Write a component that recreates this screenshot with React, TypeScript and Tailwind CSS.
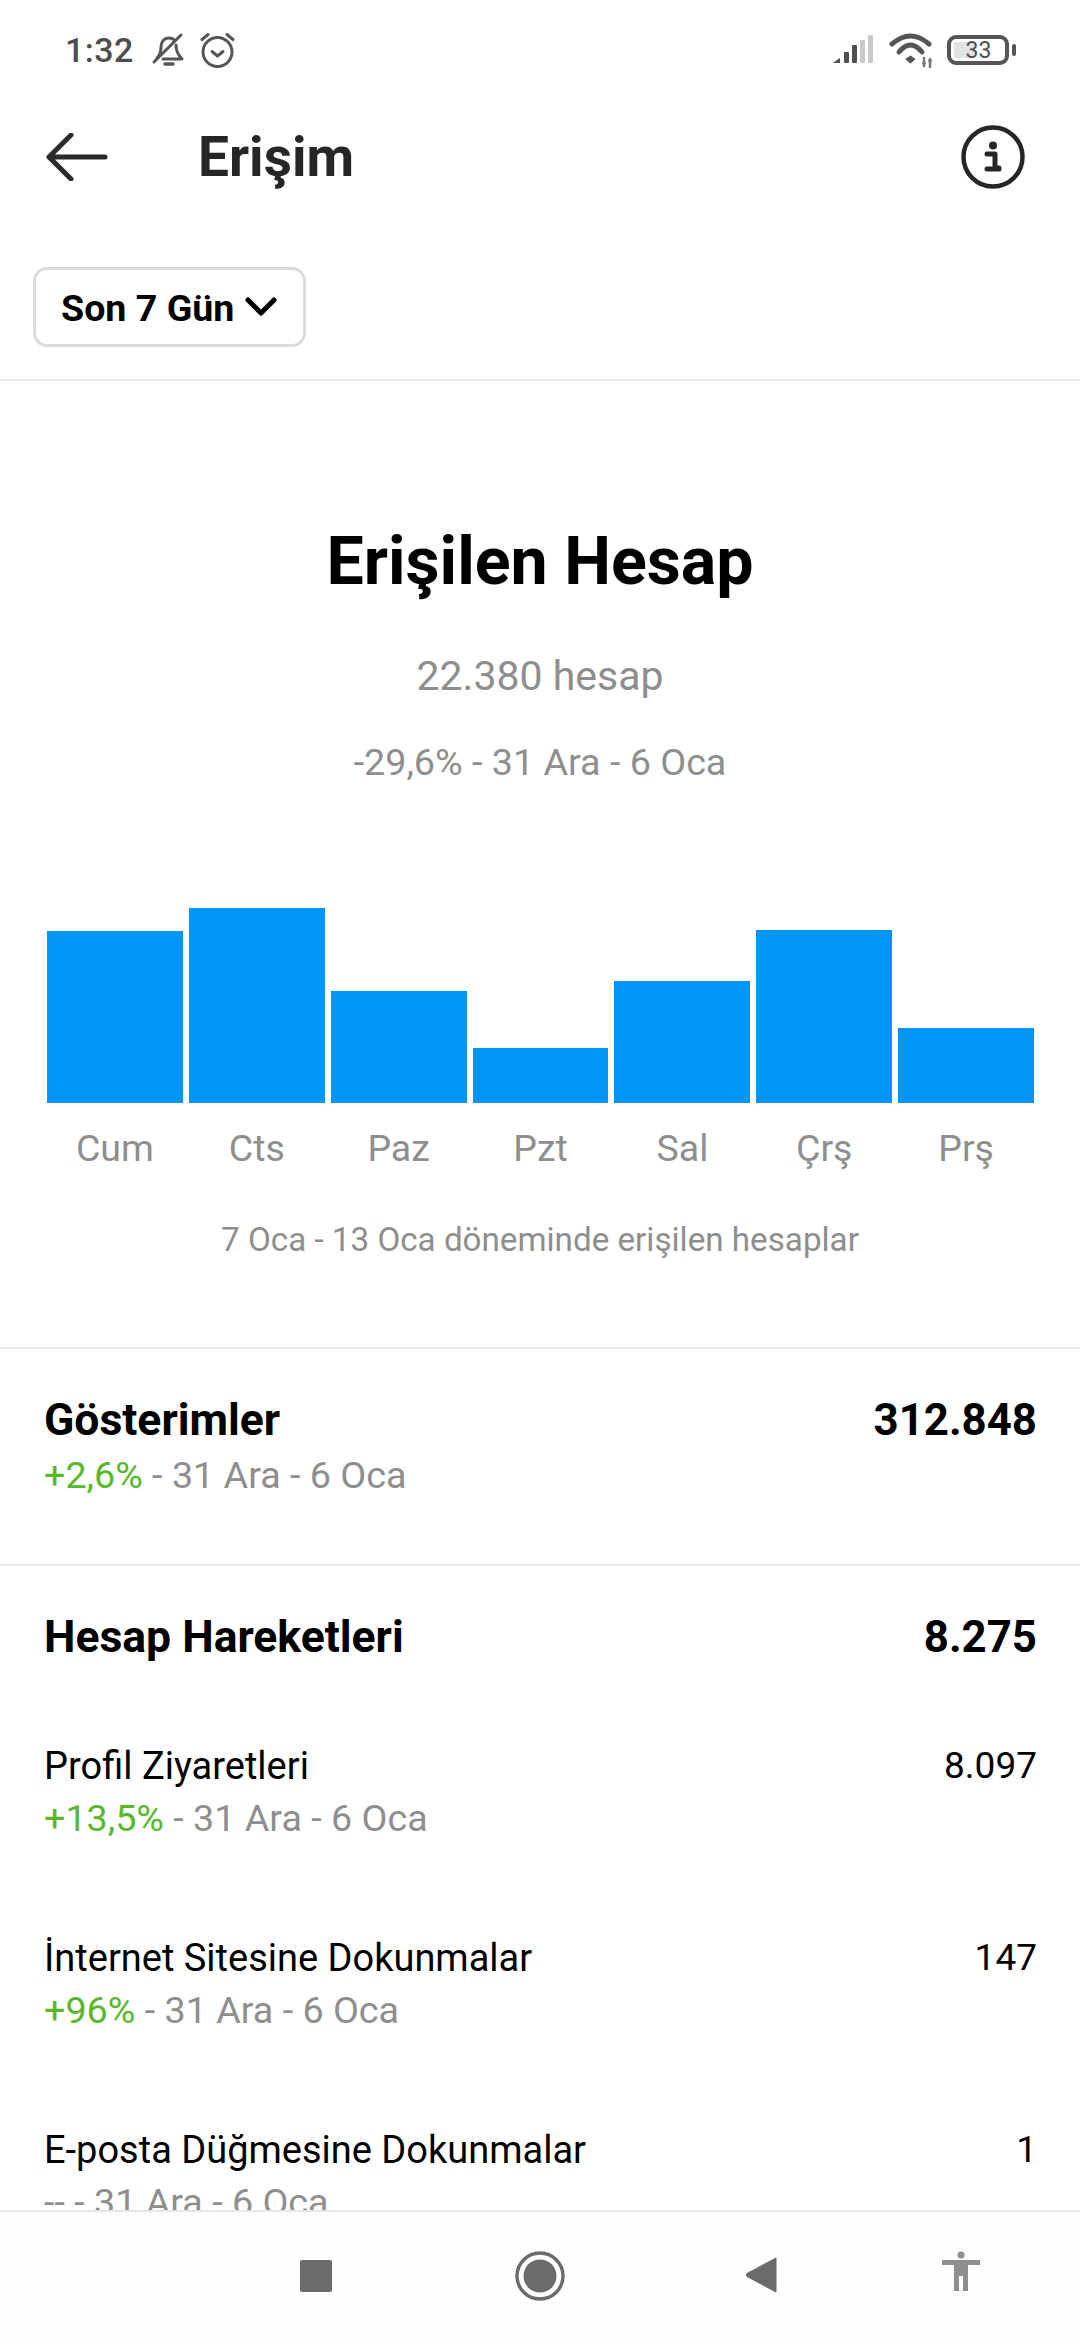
import { ReactNode } from "react";

const BARS = [
  { day: "Cum", h: 172 },
  { day: "Cts", h: 195 },
  { day: "Paz", h: 112 },
  { day: "Pzt", h: 55 },
  { day: "Sal", h: 122 },
  { day: "Çrş", h: 173 },
  { day: "Prş", h: 75 },
];

const ROWS = [
  { name: "Profil Ziyaretleri", value: "8.097", change: "+13,5%" },
  { name: "İnternet Sitesine Dokunmalar", value: "147", change: "+96%" },
  { name: "E-posta Düğmesine Dokunmalar", value: "1", change: "--" },
];

function Sub({ change, green }: { change: string; green?: boolean }) {
  return (
    <p className="text-[37.7px] leading-[46px] text-[#8e8e8e]">
      <span className={green ? "text-[#58b82c]" : ""}>{change}</span> - 31 Ara - 6 Oca
    </p>
  );
}

function Row({ left, right }: { left: ReactNode; right: ReactNode }) {
  return (
    <div className="flex justify-between items-center">
      {left}
      {right}
    </div>
  );
}

function StatusBar() {
  return (
    <div className="h-[100px] flex items-center justify-between pl-[65px] pr-[64px] text-[#4d4d4d]">
      <div className="flex items-center">
        <span className="text-[34px] font-medium leading-none tracking-[0.5px]">1:32</span>
        {/* sessiz zil */}
        <svg className="ml-[17px]" width="34" height="36" viewBox="0 0 34 36" fill="none" stroke="#555" strokeWidth="3" strokeLinecap="round" strokeLinejoin="round">
          <path d="M6 26c3-3 4-6 4-11 0-5 3-9 8-9 2 0 4 .7 5.500 2" />
          <path d="M25 13c0 6 2 10 6 14H12" />
          <path d="M14 32h8" strokeWidth="3.500" />
          <path d="M3 30 30 3" />
        </svg>
        {/* alarm */}
        <svg className="ml-[15px]" width="35" height="36" viewBox="0 0 35 36" fill="none" stroke="#555" strokeWidth="3" strokeLinecap="round" strokeLinejoin="round">
          <circle cx="17.500" cy="20" r="14.500" />
          <path d="M12 19.500l5.500 4.500 5.500-4.500" />
          <path d="M2 7.500 8 2.500M33 7.500 27 2.500" />
        </svg>
      </div>
      <div className="flex items-center">
        {/* sinyal */}
        <svg width="40" height="30" viewBox="0 0 40 30">
          <path d="M0 28 7 23v5z" fill="#4f4f4f" />
          <rect x="11" y="17" width="5" height="11" fill="#4f4f4f" rx="1" />
          <rect x="19" y="10" width="5" height="18" fill="#4f4f4f" rx="1" />
          <rect x="27" y="5" width="5" height="23" fill="#c9c9c9" rx="1" />
          <rect x="35" y="0" width="5" height="28" fill="#c9c9c9" rx="1" />
        </svg>
        {/* wifi */}
        <svg className="ml-[16px]" width="46" height="35" viewBox="0 0 46 35" fill="none" stroke="#555" strokeLinecap="round">
          <path d="M3 11Q21.500-5 40 11" strokeWidth="5" />
          <path d="M10 19Q21.500 5 33 19" strokeWidth="5" />
          <path d="M17 26l4.500-3 4.500 3-4.500 4z" fill="#555" strokeWidth="1" />
          <path d="M35 25v8M41 26v8" stroke="#777" strokeWidth="2.500" />
          <path d="M32.500 29.500h5l-2.500 4zM38.500 28.500h5l-2.500-4z" fill="#777" stroke="none" />
        </svg>
        <div className="relative ml-[12px] w-[62px] h-[30px] mr-[7px] rounded-[9px] border-[4px] border-[#555] flex items-center justify-center">
          <div className="absolute left-[3px] top-[3px] bottom-[3px] w-[20px] bg-[#e2e2e2]" />
          <span className="relative text-[23px] leading-none text-[#4d4d4d] ml-[1px]">33</span>
          <div className="absolute right-[-11px] top-[5px] w-[4px] h-[12px] rounded-[2px] bg-[#555]" />
        </div>
      </div>
    </div>
  );
}

function Header() {
  return (
    <div className="h-[114px] flex items-center pl-[46px] pr-[55px]">
      <svg width="62" height="48" viewBox="0 0 62 48" fill="none" stroke="#2b2b2b" strokeWidth="5" strokeLinecap="round" strokeLinejoin="round">
        <path d="M59 24H3M25 2 3 24l22 22" />
      </svg>
      <h1 className="ml-[90px] text-[55px] leading-none font-bold text-[#262626]">Erişim</h1>
      <svg className="ml-auto" width="64" height="64" viewBox="0 0 64 64" fill="none">
        <circle cx="32" cy="32" r="29.500" stroke="#262626" strokeWidth="4.500" />
        <circle cx="32" cy="20.500" r="4" fill="#262626" />
        <path d="M26 29h8v14h4M26 44h12" stroke="#262626" strokeWidth="5" strokeLinecap="round" strokeLinejoin="round" />
      </svg>
    </div>
  );
}

function Chart() {
  return (
    <div className="pt-[140px] pb-[87px] border-b-2 border-[#e6e6e6] text-center">
      <h2 className="text-[66.3px] leading-[80px] font-bold text-black">Erişilen Hesap</h2>
      <p className="mt-[50px] text-[41px] leading-[50px] text-[#8e8e8e]">22.380 hesap</p>
      <p className="mt-[38px] text-[37.7px] leading-[46px] text-[#8e8e8e]">-29,6% - 31 Ara - 6 Oca</p>
      <div className="mt-[123px] pl-[47px] pr-[46px] flex gap-[6px] items-end h-[195px]">
        {BARS.map((b) => (
          <div key={b.day} className="flex-1 bg-[#0095f6]" style={{ height: b.h }} />
        ))}
      </div>
      <div className="mt-[22px] pl-[47px] pr-[46px] flex gap-[6px]">
        {BARS.map((b) => (
          <span key={b.day} className="flex-1 text-[37.5px] leading-[46px] text-[#8e8e8e]">{b.day}</span>
        ))}
      </div>
      <p className="mt-[49px] text-[33.2px] leading-[40px] text-[#8e8e8e]">7 Oca - 13 Oca döneminde erişilen hesaplar</p>
    </div>
  );
}

function Stats() {
  return (
    <div className="flex-1 overflow-hidden">
      <div className="pl-[44px] pr-[43px] pt-[46px] pb-[66px] border-b-2 border-[#e6e6e6]">
        <Row
          left={<span className="text-[44.5px] leading-[50px] font-bold text-black">Gösterimler</span>}
          right={<span className="text-[43.8px] leading-[50px] font-bold text-black">312.848</span>}
        />
        <div className="mt-[7px]"><Sub change="+2,6%" green /></div>
      </div>
      <div className="pl-[44px] pr-[43px] pt-[46px]">
        <Row
          left={<span className="text-[44.5px] leading-[50px] font-bold text-black">Hesap Hareketleri</span>}
          right={<span className="text-[43.8px] leading-[50px] font-bold text-black">8.275</span>}
        />
        <div className="mt-[81px] flex flex-col gap-[94px]">
          {ROWS.map((r) => (
            <div key={r.name}>
              <Row
                left={<span className="text-[38px] leading-[46px] text-black">{r.name}</span>}
                right={<span className="text-[37px] leading-[46px] text-black">{r.value}</span>}
              />
              <div className="mt-[6px]"><Sub change={r.change} green={r.change !== "--"} /></div>
            </div>
          ))}
        </div>
      </div>
    </div>
  );
}

function NavBar() {
  return (
    <div className="h-[130px] shrink-0 border-t-2 border-[#e6e6e6] bg-[#fefefe] flex items-start pt-[39px] pl-[300px]">
      <div className="w-[32px] h-[32px] mt-[9px] rounded-[2px] bg-[#6b6b6b]" />
      <svg className="ml-[183px]" width="50" height="50" viewBox="0 0 50 50">
        <circle cx="25" cy="25" r="23" fill="none" stroke="#6b6b6b" strokeWidth="3.500" />
        <circle cx="25" cy="25" r="16.500" fill="#6b6b6b" />
      </svg>
      <svg className="ml-[180px] mt-[6px]" width="32" height="36" viewBox="0 0 32 36">
        <path d="M31 1v34L2 19.500q-1.500-1.500 0-3z" fill="#6b6b6b" stroke="#6b6b6b" strokeLinejoin="round" />
      </svg>
      <svg className="ml-[165px]" width="38" height="40" viewBox="0 0 38 40" fill="#8e8e8e">
        <circle cx="19" cy="4" r="3.500" />
        <path d="M0 9h38v5H26v26h-5V25h-4v15h-5V14H0z" />
      </svg>
    </div>
  );
}

export default function App() {
  return (
    <div className="w-[1080px] h-[2340px] overflow-hidden bg-white flex flex-col font-['Roboto',sans-serif]">
      <StatusBar />
      <Header />
      <div className="pt-[53px] pb-[32px] pl-[33px] border-b-2 border-[#e6e6e6]">
        <div className="w-[273px] h-[80px] rounded-[14px] border-[3px] border-[#dbdbdb] flex items-center pl-[25px]">
          <span className="mt-[3px] text-[37.6px] leading-none font-bold text-black">Son 7 Gün</span>
          <svg className="ml-[11px]" width="32" height="20" viewBox="0 0 32 20" fill="none" stroke="#000" strokeWidth="5" strokeLinecap="round" strokeLinejoin="round">
            <path d="M3 3l13 13L29 3" />
          </svg>
        </div>
      </div>
      <Chart />
      <Stats />
      <NavBar />
    </div>
  );
}
